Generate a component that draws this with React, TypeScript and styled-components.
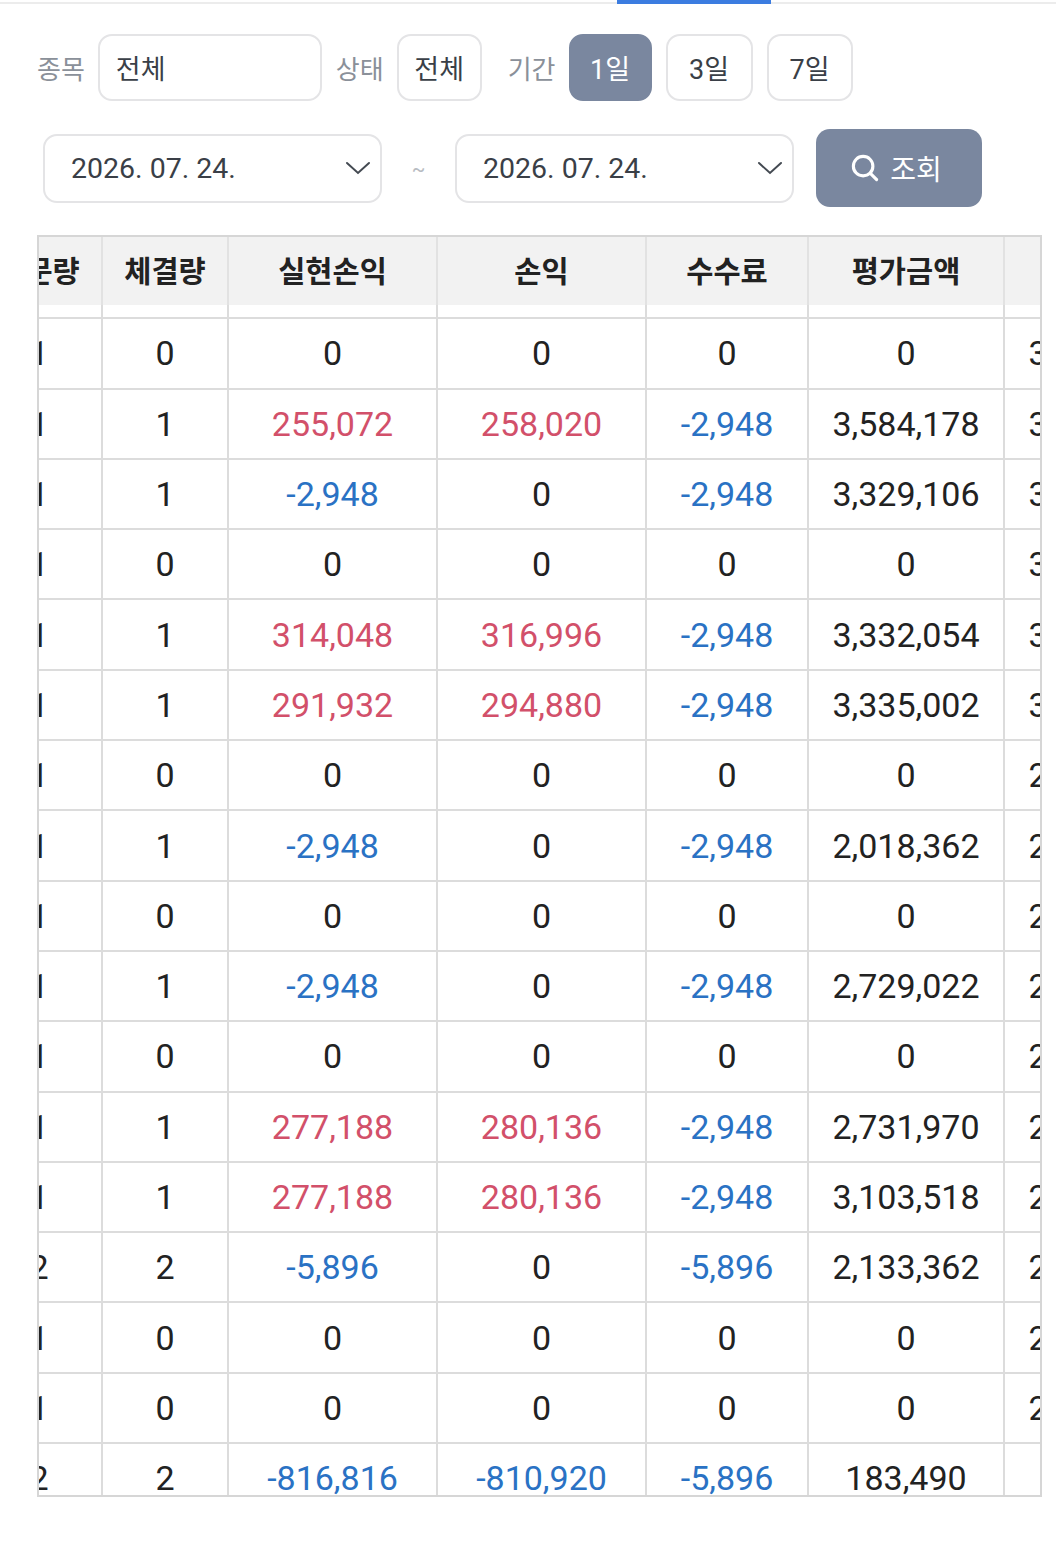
import React, { useLayoutEffect, useRef } from "react";
import styled, { createGlobalStyle } from "styled-components";

const GlobalStyle = createGlobalStyle`
  html, body { margin: 0; padding: 0; background: #fff; }
  body {
    font-family: Roboto, "Noto Sans CJK KR", sans-serif;
    color: #222;
    -webkit-font-smoothing: antialiased;
  }
`;

const Page = styled.div`
  width: 1056px;
  box-sizing: border-box;
`;

const TabStrip = styled.div`
  height: 4px;
  border-bottom: 2px solid #ececec;
  box-sizing: border-box;
  display: flex;
`;

const TabIndicator = styled.div`
  margin-left: 617px;
  width: 154px;
  height: 4px;
  background: #3b7ce0;
`;

const Filters = styled.div`
  padding: 30px 37px 0;
  display: flex;
  flex-direction: column;
`;

const FilterRow = styled.div`
  display: flex;
  align-items: center;
  height: 67px;
`;

const Label = styled.span<{ $gap?: number }>`
  font-family: "Noto Sans CJK KR", sans-serif;
  font-size: 26px;
  color: #8a9099;
  margin-left: ${({ $gap }) => $gap ?? 0}px;
  margin-right: 13px;
  white-space: nowrap;
`;

const Box = styled.div<{ $width: number; $center?: boolean }>`
  box-sizing: border-box;
  width: ${({ $width }) => $width}px;
  height: 67px;
  border: 2px solid #e4e4e6;
  border-radius: 14px;
  display: flex;
  align-items: center;
  justify-content: ${({ $center }) => ($center ? "center" : "flex-start")};
  padding-left: ${({ $center }) => ($center ? 0 : 16)}px;
  font-family: "Noto Sans CJK KR", sans-serif;
  font-size: 27px;
  color: #3a3f47;
`;

const Chip = styled.button<{ $active?: boolean; $width: number }>`
  box-sizing: border-box;
  width: ${({ $width }) => $width}px;
  height: 67px;
  margin-right: 14px;
  border-radius: 14px;
  border: 2px solid ${({ $active }) => ($active ? "#7a879f" : "#e4e4e6")};
  background: ${({ $active }) => ($active ? "#7a879f" : "#fff")};
  color: ${({ $active }) => ($active ? "#fff" : "#3a3f47")};
  font-family: Roboto, "Noto Sans CJK KR", sans-serif;
  font-size: 27px;
  padding: 0;
  display: flex;
  align-items: center;
  justify-content: center;
`;

const DateRow = styled.div`
  display: flex;
  align-items: center;
  margin-top: 28px;
  padding-left: 6px;
  height: 78px;
`;

const DateSelect = styled.div`
  box-sizing: border-box;
  width: 339px;
  height: 69px;
  border: 2px solid #e4e4e6;
  border-radius: 14px;
  display: flex;
  align-items: center;
  justify-content: space-between;
  padding: 0 8px 0 26px;
  font-size: 28.5px;
  color: #3a3f47;
`;

const Tilde = styled.span`
  width: 73px;
  text-align: center;
  font-size: 20px;
  color: #b8bcc2;
  padding-top: 2px;
`;

const SearchButton = styled.button`
  box-sizing: border-box;
  width: 166px;
  height: 78px;
  margin-left: 22px;
  border: none;
  border-radius: 14px;
  background: #7a879f;
  color: #fff;
  display: flex;
  align-items: center;
  justify-content: center;
  gap: 10px;
  font-family: "Noto Sans CJK KR", sans-serif;
  font-size: 28px;
  padding: 0 6px 0 0;
`;

const TableScroll = styled.div`
  box-sizing: border-box;
  margin: 28px 14px 0 37px;
  height: 1262px;
  border: 2px solid #d6d6d6;
  overflow: auto;
  scrollbar-width: none;
  &::-webkit-scrollbar {
    display: none;
  }
`;

const Table = styled.table`
  border-collapse: separate;
  border-spacing: 0;
  table-layout: fixed;
  width: max-content;
`;

const Th = styled.th`
  position: sticky;
  top: 0;
  z-index: 1;
  box-sizing: border-box;
  height: 68px;
  padding: 0 0 4px;
  background: #f2f2f2;
  border-right: 2px solid #e2e2e2;
  font-family: "Noto Sans CJK KR", sans-serif;
  font-size: 29.5px;
  font-weight: 700;
  color: #222;
  text-align: center;
  white-space: nowrap;
  overflow: hidden;
`;

const Tr = styled.tr`
  height: 70.31px;
`;

const Td = styled.td<{ $tone?: "up" | "down" }>`
  box-sizing: border-box;
  padding: 0;
  border-right: 2px solid #dcdcdc;
  border-bottom: 2px solid #dcdcdc;
  text-align: center;
  white-space: nowrap;
  font-size: 34px;
  color: ${({ $tone }) => ($tone === "up" ? "#d2506a" : $tone === "down" ? "#2a72c4" : "#222")};
`;

const SearchIcon = () => (
  <svg width="30" height="30" viewBox="0 0 24 24" fill="none" stroke="#fff" strokeWidth="2.5" strokeLinecap="round">
    <circle cx="10.5" cy="10.5" r="7.8" />
    <path d="M16.3 16.3l5 5" />
  </svg>
);

const Chevron = () => (
  <svg width="28" height="16" viewBox="0 0 28 16" fill="none" stroke="#444a52" strokeWidth="2" strokeLinecap="round">
    <path d="M3 3l11 10L25 3" />
  </svg>
);

type Row = {
  name: string;
  side: string;
  ordered: string;
  filled: string;
  realized: string;
  pnl: string;
  fee: string;
  value: string;
  cost: string;
};

const rows: Row[] = [
  ["삼성전자", "매수", "1", "1", "0", "0", "0", "0", "3,329,106"],
  ["삼성전자", "매수", "1", "0", "0", "0", "0", "0", "3,332,054"],
  ["SK하이닉스", "매도", "1", "1", "255,072", "258,020", "-2,948", "3,584,178", "3,329,106"],
  ["SK하이닉스", "매수", "1", "1", "-2,948", "0", "-2,948", "3,329,106", "3,326,158"],
  ["NAVER", "매수", "1", "0", "0", "0", "0", "0", "3,332,054"],
  ["NAVER", "매도", "1", "1", "314,048", "316,996", "-2,948", "3,332,054", "3,015,058"],
  ["카카오", "매도", "1", "1", "291,932", "294,880", "-2,948", "3,335,002", "3,040,122"],
  ["카카오", "매수", "1", "0", "0", "0", "0", "0", "2,018,362"],
  ["현대차", "매수", "1", "1", "-2,948", "0", "-2,948", "2,018,362", "2,015,414"],
  ["현대차", "매수", "1", "0", "0", "0", "0", "0", "2,729,022"],
  ["기아", "매수", "1", "1", "-2,948", "0", "-2,948", "2,729,022", "2,726,074"],
  ["기아", "매수", "1", "0", "0", "0", "0", "0", "2,731,970"],
  ["LG화학", "매도", "1", "1", "277,188", "280,136", "-2,948", "2,731,970", "2,451,834"],
  ["LG화학", "매도", "1", "1", "277,188", "280,136", "-2,948", "3,103,518", "2,823,382"],
  ["셀트리온", "매수", "2", "2", "-5,896", "0", "-5,896", "2,133,362", "2,127,466"],
  ["셀트리온", "매수", "1", "0", "0", "0", "0", "0", "2,133,362"],
  ["POSCO", "매수", "1", "0", "0", "0", "0", "0", "2,729,022"],
  ["합계", "", "2", "2", "-816,816", "-810,920", "-5,896", "183,490", ""],
].map(([name, side, ordered, filled, realized, pnl, fee, value, cost]) => ({
  name,
  side,
  ordered,
  filled,
  realized,
  pnl,
  fee,
  value,
  cost,
}));

const tone = (v: string): "up" | "down" | undefined => {
  if (v.startsWith("-")) return "down";
  if (v !== "0" && v !== "") return "up";
  return undefined;
};

const columns: { title: string; width: number }[] = [
  { title: "종목명", width: 200 },
  { title: "구분", width: 110 },
  { title: "주문량", width: 126 },
  { title: "체결량", width: 126 },
  { title: "실현손익", width: 209 },
  { title: "손익", width: 209 },
  { title: "수수료", width: 162 },
  { title: "평가금액", width: 196 },
  { title: "매입금액", width: 196 },
];

export default function App() {
  const scrollRef = useRef<HTMLDivElement>(null);
  const anchorColRef = useRef<HTMLTableCellElement>(null);
  const anchorRowRef = useRef<HTMLTableRowElement>(null);

  // the table is shown scrolled: 주문량 column partly off to the left, first row tucked under the header
  useLayoutEffect(() => {
    const box = scrollRef.current;
    const col = anchorColRef.current;
    const row = anchorRowRef.current;
    if (!box || !col || !row) return;
    const b = box.getBoundingClientRect();
    const c = col.getBoundingClientRect();
    const r = row.getBoundingClientRect();
    box.scrollLeft = c.left - (b.left + box.clientLeft) - 64;
    box.scrollTop = r.top - (b.top + box.clientTop) - 82;
  }, []);

  return (
    <Page>
      <GlobalStyle />
      <TabStrip>
        <TabIndicator />
      </TabStrip>
      <Filters>
        <FilterRow>
          <Label>종목</Label>
          <Box $width={224}>전체</Box>
          <Label $gap={14}>상태</Label>
          <Box $width={85} $center>
            전체
          </Box>
          <Label $gap={26}>기간</Label>
          <Chip $active $width={83}>1일</Chip>
          <Chip $width={87}>3일</Chip>
          <Chip $width={86}>7일</Chip>
        </FilterRow>
        <DateRow>
          <DateSelect>
            2026. 07. 24.
            <Chevron />
          </DateSelect>
          <Tilde>~</Tilde>
          <DateSelect>
            2026. 07. 24.
            <Chevron />
          </DateSelect>
          <SearchButton>
            <SearchIcon />
            조회
          </SearchButton>
        </DateRow>
      </Filters>
      <TableScroll ref={scrollRef}>
        <Table>
          <colgroup>
            {columns.map((c) => (
              <col key={c.title} style={{ width: c.width }} />
            ))}
          </colgroup>
          <thead>
            <tr>
              {columns.map((c) => (
                <Th key={c.title} ref={c.title === "체결량" ? anchorColRef : undefined}>
                  {c.title}
                </Th>
              ))}
            </tr>
          </thead>
          <tbody>
            {rows.map((r, i) => (
              <Tr key={i} ref={i === 1 ? anchorRowRef : undefined}>
                <Td>{r.name}</Td>
                <Td>{r.side}</Td>
                <Td>{r.ordered}</Td>
                <Td>{r.filled}</Td>
                <Td $tone={tone(r.realized)}>{r.realized}</Td>
                <Td $tone={tone(r.pnl)}>{r.pnl}</Td>
                <Td $tone={tone(r.fee)}>{r.fee}</Td>
                <Td>{r.value}</Td>
                <Td>{r.cost}</Td>
              </Tr>
            ))}
          </tbody>
        </Table>
      </TableScroll>
    </Page>
  );
}
